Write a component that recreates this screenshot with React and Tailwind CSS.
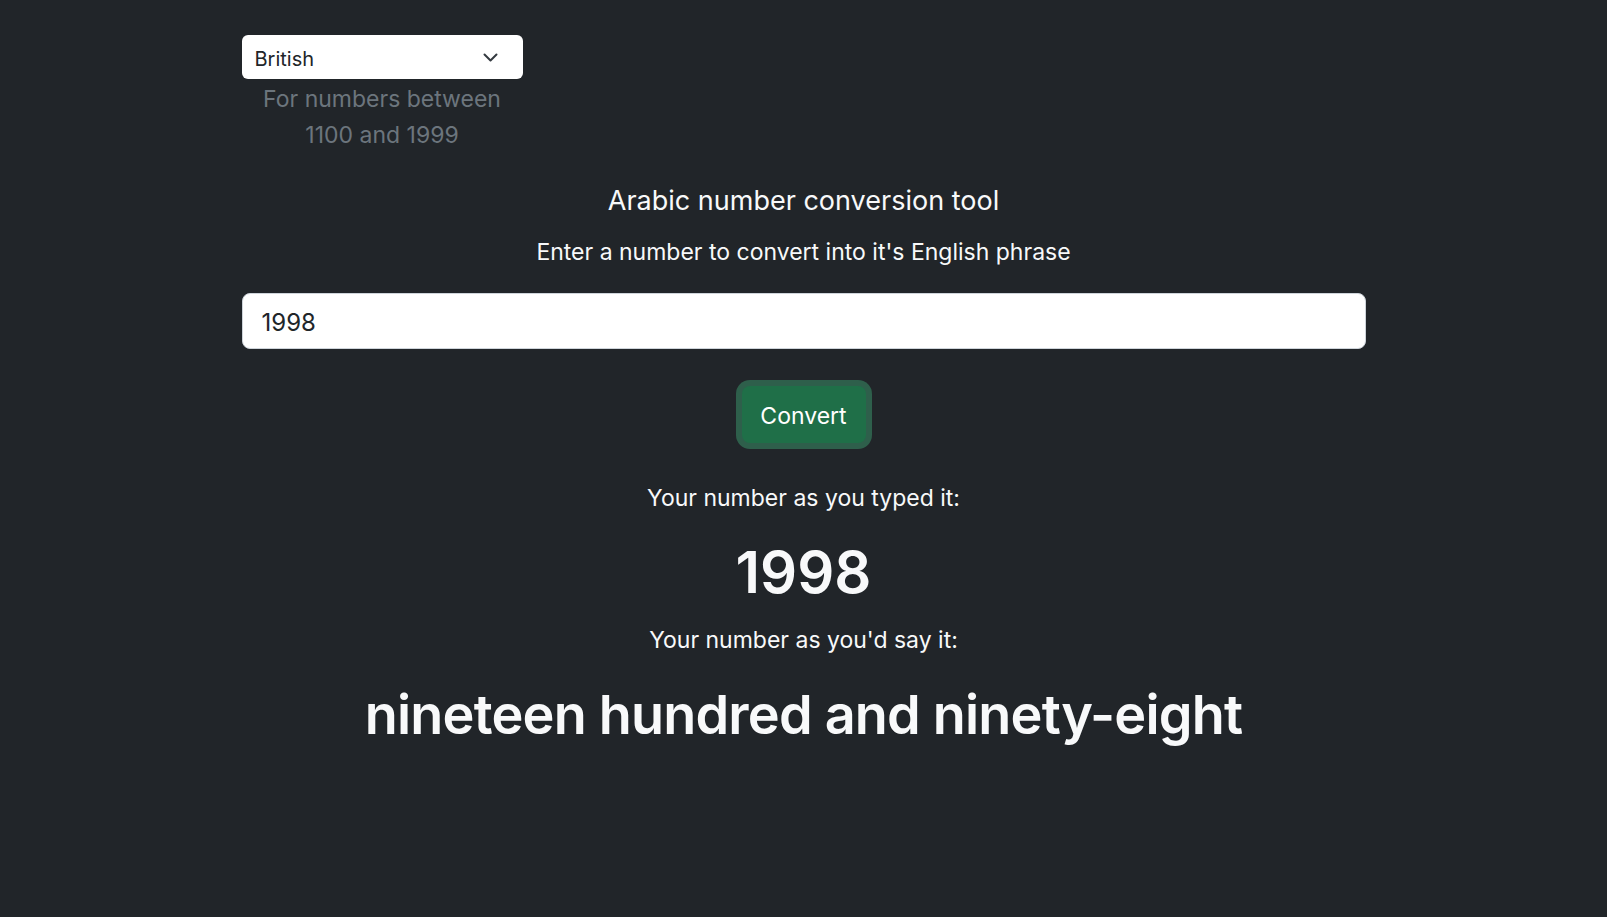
export default function App() {
  return (
    <div className="min-h-screen bg-[#212529] text-[#f8f9fa] font-['Inter','Noto_Sans',sans-serif]">
      <div className="mx-auto w-[1124px] pt-[35px]">

        {/* DIALECT PICKER */}
        <div className="w-[281px] flex flex-col items-center">
          <div className="w-full h-[44px] bg-white rounded-[6px] flex items-center justify-between pl-[13px] pr-[25px] text-[#212529] text-[20px]">
            <span className="mt-[3px]">British</span>
            <svg width="15" height="9" viewBox="0 0 15 9" fill="none" stroke="#343a40" strokeWidth="2" strokeLinecap="round" strokeLinejoin="round">
              <path d="M1.5 1.5l6 6 6-6" />
            </svg>
          </div>
          <p className="text-[#6c757d] text-[23px] leading-[36px] text-center mt-[2px]">
            For numbers between<br />1100 and 1999
          </p>
        </div>

        {/* HEADINGS */}
        <h2 className="text-center text-[27px] font-normal mt-[30px] leading-[36px]">Arabic number conversion tool</h2>
        <p className="text-center text-[23px] mt-[17px] leading-[32px]">Enter a number to convert into it's English phrase</p>

        {/* INPUT */}
        <input
          type="text"
          defaultValue="1998"
          className="mt-[25px] w-full h-[56px] bg-white rounded-[8px] border border-[#ced4da] px-[19px] pt-[3px] text-[24px] text-[#212529] outline-none"
        />

        <div className="flex justify-center mt-[37px]">
          <button className="w-[124px] h-[57px] rounded-[8px] bg-[#1f6f48] text-white text-[23px] pt-[3px] shadow-[0_0_0_6px_rgba(60,153,110,0.5)]">
            Convert
          </button>
        </div>

        {/* RESULTS */}
        <p className="text-center text-[23px] mt-[39px] leading-[32px]">Your number as you typed it:</p>
        <p className="text-center text-[58px] font-semibold leading-[70px] mt-[23px]">1998</p>
        <p className="text-center text-[23px] mt-[17px] leading-[32px]">Your number as you'd say it:</p>
        <p className="text-center text-[54px] font-semibold tracking-[-0.8px] leading-[70px] mt-[24px]">nineteen hundred and ninety-eight</p>
      </div>
    </div>
  )
}
